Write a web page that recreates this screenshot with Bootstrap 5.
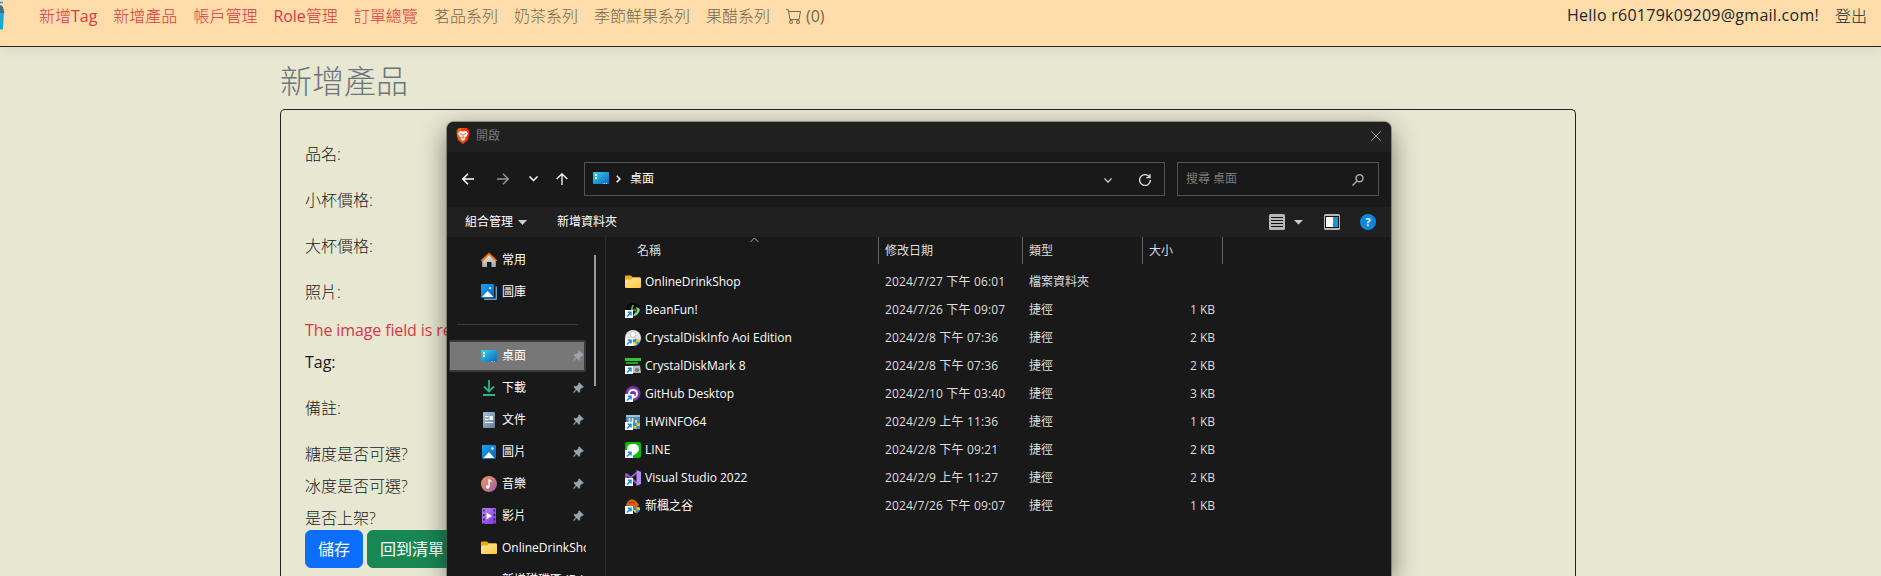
<!DOCTYPE html>
<html lang="zh-Hant">
<head>
<meta charset="utf-8">
<meta name="viewport" content="width=device-width, initial-scale=1">
<title>新增產品</title>
<link href="https://cdn.jsdelivr.net/npm/bootstrap@5.3.0/dist/css/bootstrap.min.css" rel="stylesheet">
<style>
body{background:#e7e7d2;font-family:"Open Sans","Noto Sans CJK TC",sans-serif;font-weight:300;font-size:16px;height:576px;overflow:hidden;position:relative;color:#212529}
.shop-bar{background:#ffddab;height:47px;border-bottom:1px solid #212529;box-shadow:0 4px 12px rgba(0,0,0,.06);padding:0 14px 0 0;align-items:flex-start}
.shop-bar .nav-link{padding:0 8px;line-height:24px;white-space:nowrap;color:#75664f}
.shop-bar .nav-link.text-danger{color:#dc3545!important}
.shop-bar .nav-link.dark{color:#212529}
.cup{width:31px;height:32px;flex:none}
.lat{font-weight:400;letter-spacing:-.02px}
.lat.mail{letter-spacing:.26px;position:relative;top:-1px}
.page{width:1296px;margin-left:280px}
h1.title{font-size:32px;font-weight:300;line-height:38px;margin:15px 0 9px;color:#6c757d}
.panel{border:1px solid #212529;border-bottom:0;border-radius:5px 5px 0 0;height:467px;padding:32px 24px 0;color:#16191c}
.panel .fld{height:24px;line-height:24px;margin-bottom:22px;white-space:nowrap}
.panel .fld.tight{margin-bottom:8px}
.panel .fld.err{font-weight:400;letter-spacing:-.12px;margin-bottom:8px}
.btn{font-weight:400;padding:6px 12px;height:38px;line-height:24px}
.dlg{position:absolute;left:447px;top:122px;width:944px;height:454px;background:#191919;color:#fff;border-radius:7px 7px 0 0;box-shadow:0 0 0 1px rgba(90,90,80,.55),0 8px 26px rgba(0,0,0,.5);font-size:12px;font-weight:400;line-height:16px}
.dlg svg{flex:none;display:block}
.tbar{height:30px;background:#202020;border-radius:7px 7px 0 0;padding:0 10px 0 9px;color:#777}
.navrow{height:55px;padding:0 12px 2px 15px}
.box{height:34px;border:1px solid #535353}
.tools{height:30px;background:#202020;padding:0 15px 0 18px}
.lower{height:339px;overflow:hidden}
.side{width:159px;height:340px;border-right:1px solid #2c2c2c;position:relative;padding-top:7px;margin-right:1px}
.side .it{height:32px;padding-left:34px;width:139px;overflow:hidden;white-space:nowrap}
.side .it>span{margin-left:5px;flex:1;overflow:hidden}
.side .it svg.pin{margin-right:2px}
.side .it.sel{background:#777;border:2px solid #3a3a3a;border-left-width:1px;height:32px;margin-left:2px;padding-left:31px;width:137px;border-radius:2px}
.side .it.sel svg.pin{margin-right:0}
.side hr{margin:16px 0 15px 10px;width:121px;height:1px;border:0;background:#3c3c3c;opacity:1}
.sbar{position:absolute;left:147px;top:18px;width:2px;height:131px;background:#999}
.files{padding-left:18px;width:640px}
.fr{display:grid;grid-template-columns:253px 145px 120px 72px;height:28px;align-items:center;white-space:nowrap;color:#dedede}
.fr .nm{display:flex;align-items:center;color:#fff}
.fr .nm svg{margin-right:4px}
.fr .sz{text-align:right}
.fr .dt{padding-left:7px;letter-spacing:.14px}
.fr .ty{padding-left:6px}
.fr.head{height:28px;margin-bottom:3px;position:relative;grid-template-columns:254px 144px 120px 80px;align-items:start}
.fr.head>div{height:27px;line-height:28px;border-right:1px solid #636363;padding-left:6px}
.fr.head>div:first-child{padding-left:12px}
.fr.head svg{position:absolute;left:125px;top:0}
</style>
<script src="https://cdn.jsdelivr.net/npm/bootstrap@5.3.0/dist/js/bootstrap.bundle.min.js"></script>
</head>
<body>
<svg width="0" height="0" class="position-absolute">
<defs>
<linearGradient id="gm" x1="0" y1="0" x2="1" y2="1"><stop offset="0" stop-color="#37d5e6"/><stop offset="1" stop-color="#0b63c4"/></linearGradient>
<linearGradient id="gp" x1="0" y1="0" x2="1" y2="1"><stop offset="0" stop-color="#1ba5ec"/><stop offset="1" stop-color="#0a5fc0"/></linearGradient>
<linearGradient id="gf" x1="0" y1="0" x2="1" y2="1"><stop offset="0" stop-color="#ffe7a0"/><stop offset="1" stop-color="#ffc83a"/></linearGradient>
<linearGradient id="ga" x1="0" y1="0" x2="1" y2="1"><stop offset="0" stop-color="#f39a55"/><stop offset="1" stop-color="#9d5cae"/></linearGradient>
<linearGradient id="gv" x1="0" y1="0" x2="1" y2="1"><stop offset="0" stop-color="#b985f5"/><stop offset="1" stop-color="#7a37dd"/></linearGradient>
<linearGradient id="gd" x1="0" y1="0" x2="1" y2="1"><stop offset="0" stop-color="#a9bfd3"/><stop offset="1" stop-color="#5f7f9f"/></linearGradient>
<linearGradient id="gh" x1="0" y1="0" x2="0" y2="1"><stop offset="0" stop-color="#e8e8e8"/><stop offset="1" stop-color="#a8a8a8"/></linearGradient>
<linearGradient id="gb" x1="0" y1="0" x2="1" y2="0"><stop offset="0" stop-color="#ff6a13"/><stop offset="1" stop-color="#f5220d"/></linearGradient>
</defs>
<symbol id="desk" viewBox="0 0 16 16"><rect y="2" width="16" height="12" rx="1" fill="url(#gm)"/><path d="M2 4h2v2H2zM2 7h2v2H2z" fill="#fff"/><path d="M10.500 13.500h1M13 13.500h1" stroke="#fff"/></symbol>
<symbol id="folder" viewBox="0 0 16 16"><path d="M0 2.500Q0 1.500 1 1.500H6L8 3.500H15V8H0Z" fill="#f0a80c"/><path d="M0 6.500Q0 5.500 1 5.500H6L8 3.500H15Q16 3.500 16 4.500V13Q16 14 15 14H1Q0 14 0 13Z" fill="url(#gf)"/></symbol>
<symbol id="pin" viewBox="0 0 11 12"><path d="M6 1 10 5 9.500 6 8.500 6 6.500 8 6.500 10.500 5.500 10.500 3.300 8.300 .5 11 0 10.500 2.700 7.700 .7 5.500.8 4.500 3.500 4.500 5.500 2.500 5.200 1.500Z" transform="translate(.3 -.3)" fill="#9aa4ac" stroke="#9aa4ac" stroke-width=".5"/></symbol>
<symbol id="cut" viewBox="0 0 8 8"><rect width="8" height="8" fill="#fff"/><path d="M2 6.500 5.500 3M2.800 2.200H6V5.400" fill="none" stroke="#1688de" stroke-width="1.500"/></symbol>
<symbol id="shield" viewBox="0 0 8 8"><path d="M0 1Q2.500 1 4 0V4H0Z" fill="#1d8fe6"/><path d="M4 0Q5.500 1 8 1V4H4Z" fill="#ffc515"/><path d="M0 4H4V8Q1 7 0 4Z" fill="#ffc515"/><path d="M4 4H8Q7 7 4 8Z" fill="#1d8fe6"/></symbol>
</svg>

<nav class="shop-bar d-flex">
  <svg class="cup" viewBox="0 0 31 32"><path d="M0 12H4L3 29Q2.500 29.500 0 29.500Z" fill="#18a8dc"/><path d="M0 5Q3 5.500 3.500 9L4.500 13H0Z" fill="#46707c"/><path d="M0 2.500H3" stroke="#12a0dd" stroke-width="1.600"/></svg>
  <ul class="nav flex-nowrap me-auto pt-1">
    <li><a class="nav-link text-danger">新增<span class="lat">Tag</span></a></li>
    <li><a class="nav-link text-danger">新增產品</a></li>
    <li><a class="nav-link text-danger">帳戶管理</a></li>
    <li><a class="nav-link text-danger"><span class="lat">Role</span>管理</a></li>
    <li><a class="nav-link text-danger">訂單總覽</a></li>
    <li><a class="nav-link">茗品系列</a></li>
    <li><a class="nav-link">奶茶系列</a></li>
    <li><a class="nav-link">季節鮮果系列</a></li>
    <li><a class="nav-link">果醋系列</a></li>
    <li><a class="nav-link d-flex align-items-center"><svg width="16" height="16" viewBox="0 0 16 16" fill="currentColor" class="me-1"><path d="M0 1.500A.5.5 0 0 1 .5 1H2a.5.5 0 0 1 .485.379L2.890 3H14.500a.5.5 0 0 1 .491.592l-1.500 8A.5.5 0 0 1 13 12H4a.5.5 0 0 1-.491-.408L2.010 3.607 1.610 2H.5a.5.5 0 0 1-.5-.5zM3.102 4l1.313 7h8.170l1.313-7H3.102zM5 12a2 2 0 1 0 0 4 2 2 0 0 0 0-4zm7 0a2 2 0 1 0 0 4 2 2 0 0 0 0-4zm-7 1a1 1 0 1 1 0 2 1 1 0 0 1 0-2zm7 0a1 1 0 1 1 0 2 1 1 0 0 1 0-2z"/></svg><span class="lat">(0)</span></a></li>
  </ul>
  <ul class="nav flex-nowrap pt-1">
    <li><a class="nav-link dark"><span class="lat mail">Hello r60179k09209@gmail.com!</span></a></li>
    <li><a class="nav-link dark pe-0">登出</a></li>
  </ul>
</nav>

<main class="page">
  <h1 class="title">新增產品</h1>
  <div class="panel">
    <div class="fld">品名:</div>
    <div class="fld">小杯價格:</div>
    <div class="fld">大杯價格:</div>
    <div class="fld mb-3">照片:</div>
    <div class="fld err text-danger" style="margin-top:-2px">The image field is required.</div>
    <div class="fld"><span class="lat">Tag:</span></div>
    <div class="fld">備註:</div>
    <div class="fld tight">糖度是否可選?</div>
    <div class="fld tight">冰度是否可選?</div>
    <div class="fld mb-0">是否上架?</div>
    <div class="d-flex gap-1"><button class="btn btn-primary">儲存</button><button class="btn btn-success">回到清單</button></div>
  </div>
</main>

<section class="dlg">
  <div class="tbar d-flex align-items-center">
    <svg width="14" height="16" viewBox="0 0 14 16" style="margin-right:6px;margin-top:-2px"><path d="M3 0H11L13.500 2.500 13 4 13.500 5 12 12 7 16 2 12 .5 5 1 4 .5 2.500Z" fill="url(#gb)"/><path d="M4 3 7 3.500 10 3 12 5.500 10.500 8.500 9 9.500 9.500 11 7 13 4.500 11 5 9.500 3.500 8.500 2 5.500Z" fill="#fff"/><path d="M4 5.500 6 6.500M10 5.500 8 6.500M7 6V9M5.500 9.200 7 10 8.500 9.200" stroke="#fb4a15" fill="none"/></svg>
    <span class="me-auto" style="margin-top:-2px">開啟</span>
    <svg width="10" height="10" viewBox="0 0 10 10" style="margin-top:-2px"><path d="M0 0 10 10M10 0 0 10" stroke="#9a9a9a"/></svg>
  </div>
  <div class="navrow d-flex align-items-center">
    <svg width="12" height="12" viewBox="0 0 12 12" fill="none" stroke="#fff" stroke-width="1.500"><path d="M6 .7.8 6 6 11.300M1 6H12"/></svg>
    <svg width="12" height="12" viewBox="0 0 12 12" fill="none" stroke="#959595" stroke-width="1.500" style="margin-left:23px"><path d="M6 .7 11.200 6 6 11.300M0 6H11"/></svg>
    <svg width="9" height="6" viewBox="0 0 9 6" fill="none" stroke="#fff" stroke-width="1.500" style="margin-left:20px"><path d="M.5.5 4.500 4.500 8.500.5"/></svg>
    <svg width="12" height="12" viewBox="0 0 12 12" fill="none" stroke="#fff" stroke-width="1.300" style="margin-left:18px"><path d="M.7 6 6 .8 11.300 6M6 1V12"/></svg>
    <div class="box d-flex align-items-center" style="width:581px;margin-left:16px;padding:0 13px 0 8px">
      <svg width="16" height="16" style="margin-top:-2px"><use href="#desk"/></svg>
      <svg width="5" height="8" viewBox="0 0 5 8" style="margin-left:7px" fill="none" stroke="#fff" stroke-width="1.500"><path d="M.7.7 4 4 .7 7.300"/></svg>
      <span class="me-auto" style="margin-left:9px;margin-top:1px">桌面</span>
      <svg width="8" height="5" viewBox="0 0 8 5" fill="none" stroke="#ddd" stroke-width="1.200" class="mt-1"><path d="M.4.4 4 4.200 7.600.4"/></svg>
      <svg width="12" height="12" viewBox="0 0 12 12" fill="none" stroke="#ddd" stroke-width="1.300" style="margin-left:27px;margin-top:2px"><path d="M10.600 3.200A5.400 5.400 0 1 0 11.400 6M11 0V3.700H7.300"/></svg>
    </div>
    <div class="box d-flex align-items-center" style="width:202px;margin-left:12px;padding:0 14px 0 8px;color:#7c7c7c">
      <span class="me-auto" style="margin-top:1px">搜尋 桌面</span>
      <svg width="12" height="12" viewBox="0 0 12 12" fill="none" stroke="#aaa" stroke-width="1.500" style="margin-top:2px"><circle cx="7.500" cy="4.300" r="3.500"/><path d="M5 7 .5 11.500"/></svg>
    </div>
  </div>
  <div class="tools d-flex align-items-center">
    <span>組合管理</span>
    <svg width="9" height="5" viewBox="0 0 9 5" style="margin-left:5px"><path d="M0 0H9L4.500 5Z" fill="#ccc"/></svg>
    <span class="me-auto" style="margin-left:30px">新增資料夾</span>
    <svg width="16" height="16" viewBox="0 0 16 16"><rect width="16" height="16" rx="1.500" fill="#b6b6b6"/><path d="M2 3.500H14M2 6.500H14M2 9.500H14M2 12.500H14" stroke="#111"/></svg>
    <svg width="9" height="5" viewBox="0 0 9 5" style="margin-left:9px"><path d="M0 0H9L4.500 4.500Z" fill="#ccc"/></svg>
    <svg width="16" height="16" viewBox="0 0 16 16" style="margin-left:21px"><rect width="16" height="16" rx="1.500" fill="#b6b6b6"/><rect x="1.500" y="2.500" width="13" height="11" fill="#fff" stroke="#111"/><rect x="9" y="3" width="5" height="10" fill="#1a93e0"/></svg>
    <svg width="16" height="16" viewBox="0 0 16 16" style="margin-left:20px"><circle cx="8" cy="8" r="8" fill="#0e86dd"/><text x="8" y="12" text-anchor="middle" fill="#fff" font-size="11" font-weight="700">?</text></svg>
  </div>
  <div class="lower d-flex">
    <div class="side">
      <div class="it d-flex align-items-center"><svg width="16" height="16" viewBox="0 0 16 16"><path d="M1.200 8 8 2 14.800 8V15H10.500V10H6V15H1.200Z" fill="url(#gh)"/><path d="M.5 9 8 1.800 15.500 9" fill="none" stroke="#ee7413" stroke-width="2"/></svg><span>常用</span></div>
      <div class="it d-flex align-items-center"><svg width="16" height="16" viewBox="0 0 16 16"><path d="M3 14.500H14.500V2.500H16V15Q16 16 15 16H3Z" fill="#5b9fdb"/><rect width="13" height="14" rx="1" fill="url(#gp)"/><path d="M1 13 6.500 7 12.500 13Z" fill="#fff"/><circle cx="9.200" cy="4.200" r="1.100" fill="#fff"/></svg><span>圖庫</span></div>
      <hr>
      <div class="it sel d-flex align-items-center"><svg width="16" height="16"><use href="#desk"/></svg><span>桌面</span><svg class="pin" width="11" height="12"><use href="#pin"/></svg></div>
      <div class="it d-flex align-items-center"><svg width="16" height="16" viewBox="0 0 16 16" fill="none" stroke="#24b78c" stroke-width="1.800"><path d="M8 0V11M3 6.500 8 11.500 13 6.500M2 15H14"/></svg><span>下載</span><svg class="pin" width="11" height="12"><use href="#pin"/></svg></div>
      <div class="it d-flex align-items-center"><svg width="16" height="16" viewBox="0 0 16 16"><rect x="2" width="12" height="16" rx="1" fill="url(#gd)"/><path d="M4 4.500H7.500M4 7.500H7.500M4 10.500H12" stroke="#fff" stroke-width="1.200"/><path d="M8.500 4H12V8H8.500Z" fill="#fff"/></svg><span>文件</span><svg class="pin" width="11" height="12"><use href="#pin"/></svg></div>
      <div class="it d-flex align-items-center"><svg width="16" height="16" viewBox="0 0 16 16"><rect x="1" y="1" width="14" height="14" rx="1" fill="url(#gp)"/><path d="M2.500 14 8 8 13.500 14Z" fill="#fff"/><circle cx="11.500" cy="4.500" r="1.200" fill="#fff"/></svg><span>圖片</span><svg class="pin" width="11" height="12"><use href="#pin"/></svg></div>
      <div class="it d-flex align-items-center"><svg width="16" height="16" viewBox="0 0 16 16"><circle cx="8" cy="8" r="8" fill="url(#ga)"/><ellipse cx="6.700" cy="11" rx="1.900" ry="1.700" fill="#fff"/><path d="M8 11V4L10.500 5.500" fill="none" stroke="#fff" stroke-width="1.300"/></svg><span>音樂</span><svg class="pin" width="11" height="12"><use href="#pin"/></svg></div>
      <div class="it d-flex align-items-center"><svg width="16" height="16" viewBox="0 0 16 16"><rect x="1" width="14" height="16" rx="1" fill="url(#gv)"/><path d="M2.800 1.500V16M13.200 1.500V16" stroke="#371a70" stroke-width="1.500" stroke-dasharray="2 2.500"/><path d="M5.500 4.500 11 8 5.500 11.500Z" fill="#fff"/></svg><span>影片</span><svg class="pin" width="11" height="12"><use href="#pin"/></svg></div>
      <div class="it d-flex align-items-center"><svg width="16" height="16"><use href="#folder"/></svg><span>OnlineDrinkShop</span></div>
      <div class="it d-flex align-items-center"><svg width="16" height="16"></svg><span>新增磁碟區 (D:)</span></div>
      <div class="sbar"></div>
    </div>
    <div class="files">
      <div class="fr head"><div>名稱</div><div>修改日期</div><div>類型</div><div>大小</div><svg width="9" height="6" viewBox="0 0 9 6" fill="none" stroke="#aaa"><path d="M.5 5 4.500 1 8.500 5"/></svg></div>
      <div class="fr"><div class="nm"><svg width="16" height="16"><use href="#folder"/></svg>OnlineDrinkShop</div><div class="dt">2024/7/27 下午 06:01</div><div class="ty">檔案資料夾</div><div class="sz"></div></div>
      <div class="fr"><div class="nm"><svg width="16" height="16" viewBox="0 0 16 16"><circle cx="8" cy="8" r="7" fill="#070707"/><path d="M8 3 6.500 8H12L11 11" fill="none" stroke="#6fae3c" stroke-width="1.600"/><path d="M8 14.500Q14 13.500 15 7L11 5V9Z" fill="#86d89a"/><path d="M9 7H12L11 11" fill="none" stroke="#264a1d"/><use href="#cut" y="8" width="8" height="8"/></svg>BeanFun!</div><div class="dt">2024/7/26 下午 09:07</div><div class="ty">捷徑</div><div class="sz">1 KB</div></div>
      <div class="fr"><div class="nm"><svg width="16" height="16" viewBox="0 0 16 16"><circle cx="8" cy="8" r="8" fill="#dceaea"/><circle cx="8" cy="4.500" r="2.800" fill="#fff" stroke="#f0b7b9"/><use href="#shield" x="8" y="8" width="7" height="8"/><use href="#cut" y="8" width="8" height="8"/></svg>CrystalDiskInfo Aoi Edition</div><div class="dt">2024/2/8 下午 07:36</div><div class="ty">捷徑</div><div class="sz">2 KB</div></div>
      <div class="fr"><div class="nm"><svg width="16" height="16" viewBox="0 0 16 16"><path d="M0 0H16V3H0Z" fill="#36c235"/><path d="M1 4H13V6H1Z" fill="#21a526"/><path d="M3 8 15 7.500 16 15H5Z" fill="#b9bdbd"/><circle cx="12" cy="12" r="2" fill="#6d7a6d"/><use href="#cut" y="8" width="8" height="8"/></svg>CrystalDiskMark 8</div><div class="dt">2024/2/8 下午 07:36</div><div class="ty">捷徑</div><div class="sz">2 KB</div></div>
      <div class="fr"><div class="nm"><svg width="16" height="16" viewBox="0 0 16 16"><circle cx="8" cy="7.500" r="7.500" fill="#7d34a5"/><path d="M4 8Q4 4 8 4Q12 4 12 7.500Q12 11 8.500 11.500V8" fill="none" stroke="#fff" stroke-width="1.800"/><use href="#cut" y="8" width="8" height="8"/></svg>GitHub Desktop</div><div class="dt">2024/2/10 下午 03:40</div><div class="ty">捷徑</div><div class="sz">3 KB</div></div>
      <div class="fr"><div class="nm"><svg width="16" height="16" viewBox="0 0 16 16"><rect x="1" y="1" width="14" height="14" fill="#4d8db0"/><path d="M1 2H15" stroke="#9cc4d8" stroke-width="2"/><path d="M4.500 4V9M7.500 4V9M11 6V9" stroke="#e4f2f8" stroke-width="1.500"/><use href="#shield" x="8" y="8" width="7" height="8"/><use href="#cut" y="8" width="8" height="8"/></svg>HWiNFO64</div><div class="dt">2024/2/9 上午 11:36</div><div class="ty">捷徑</div><div class="sz">1 KB</div></div>
      <div class="fr"><div class="nm"><svg width="16" height="16" viewBox="0 0 16 16"><rect width="16" height="16" rx="2" fill="#05b90a"/><path d="M8 2Q14 2 14 7Q14 10 8.500 13.500L7 11Q2 10.500 2 7Q2 2 8 2Z" fill="#fff"/><use href="#cut" y="8" width="8" height="8"/></svg>LINE</div><div class="dt">2024/2/8 下午 09:21</div><div class="ty">捷徑</div><div class="sz">2 KB</div></div>
      <div class="fr"><div class="nm"><svg width="16" height="16" viewBox="0 0 16 16"><path d="M1.500 4 12 13.500M1.500 11 12 2.500M1.200 3.500V11" stroke="#8b5ac8" stroke-width="2.200" fill="none"/><path d="M11.500 0 16 2V14L11.500 16Z" fill="#b78cf0"/><use href="#cut" y="8" width="8" height="8"/></svg>Visual Studio 2022</div><div class="dt">2024/2/9 上午 11:27</div><div class="ty">捷徑</div><div class="sz">2 KB</div></div>
      <div class="fr"><div class="nm"><svg width="16" height="16" viewBox="0 0 16 16"><path d="M1 7 3 3 7 1 11 3 14 7 11 10H3Z" fill="#d9620e"/><path d="M4 5Q7 3 10 5" stroke="#8c3507" fill="none"/><use href="#shield" x="8" y="8" width="7" height="8"/><use href="#cut" y="8" width="8" height="8"/></svg>新楓之谷</div><div class="dt">2024/7/26 下午 09:07</div><div class="ty">捷徑</div><div class="sz">1 KB</div></div>
    </div>
  </div>
</section>
</body>
</html>
